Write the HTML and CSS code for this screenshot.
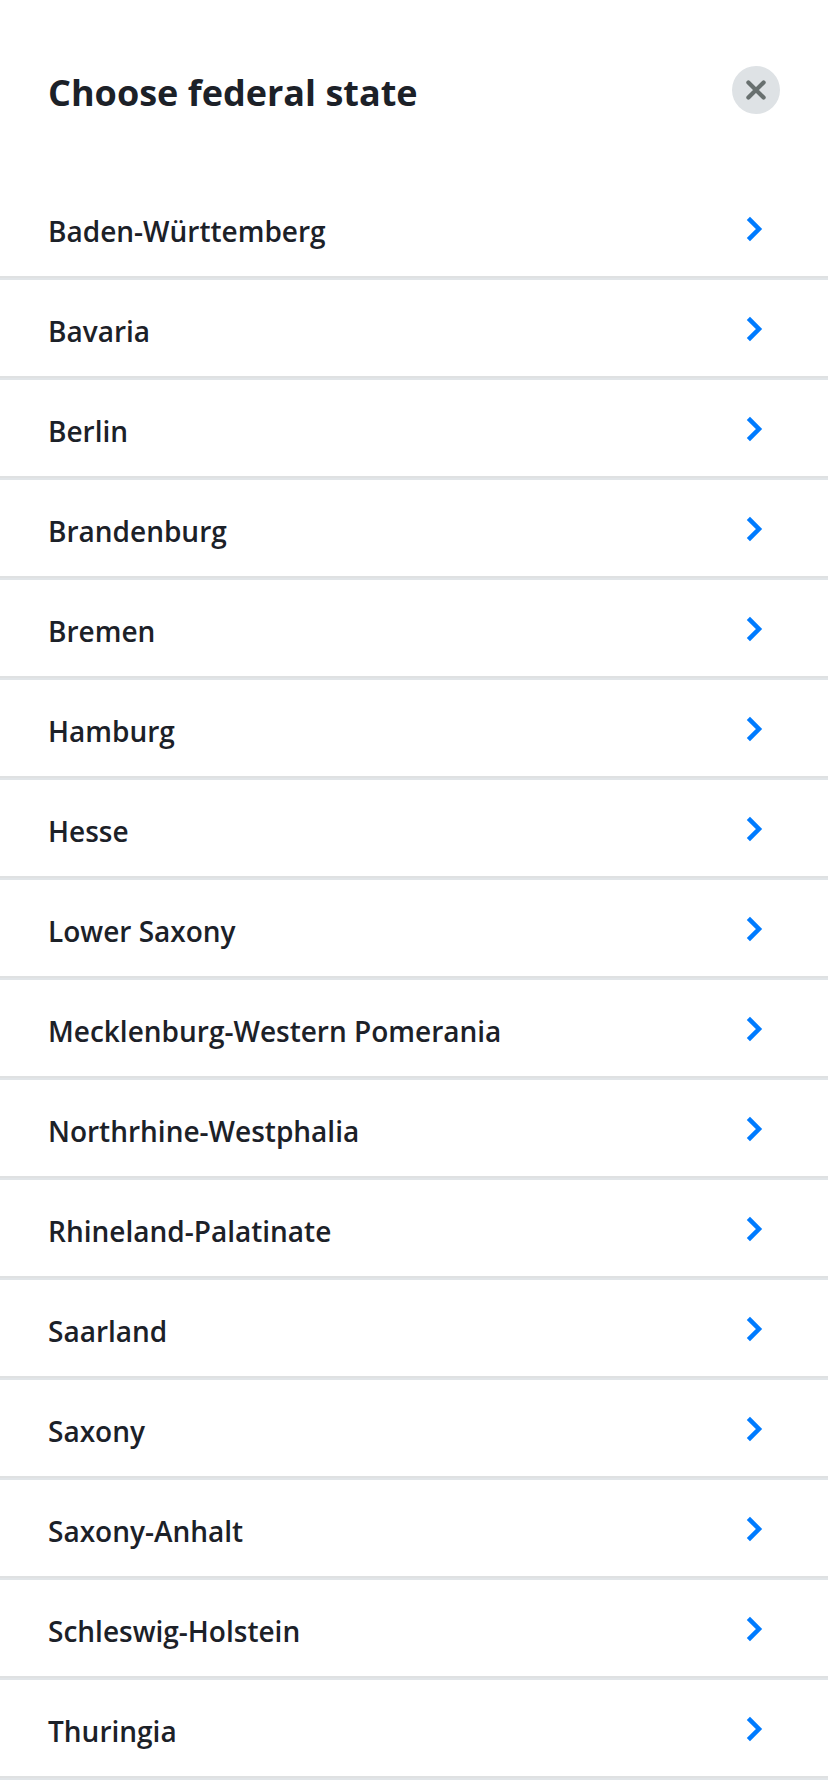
FILE: index.html
```html
<!DOCTYPE html>
<html lang="en">
<head>
<meta charset="utf-8">
<title>Choose federal state</title>
<link rel="stylesheet" href="styles.css">
</head>
<body>
<header class="header">
  <h1 class="title">Choose federal state</h1>
  <button class="close" aria-label="Close"><svg width="48" height="48" viewBox="0 0 48 48"><path d="M16.4 16.4 31.6 31.6M31.6 16.4 16.4 31.6"/></svg></button>
</header>
<ul class="list" id="states"></ul>
<script src="states.js"></script>
</body>
</html>
```
FILE: styles.css
```css
* { box-sizing: border-box; }
body {
  margin: 0;
  height: 1792px;
  overflow: hidden;
  background: #fff;
  color: #1c2128;
  font-family: "Open Sans", sans-serif;
}
.header {
  display: flex;
  justify-content: space-between;
  align-items: flex-start;
  height: 180px;
  padding: 66px 48px 0;
}
.title {
  margin: 0;
  font-size: 36px;
  line-height: 54px;
  font-weight: 700;
}
.close {
  width: 48px;
  height: 48px;
  padding: 0;
  border: 0;
  border-radius: 50%;
  background: #dee2e5;
}
.close svg {
  display: block;
  fill: none;
  stroke: #68706f;
  stroke-width: 4.2;
  stroke-linecap: round;
}
.list { margin: 0; padding: 0; list-style: none; }
.row {
  display: flex;
  justify-content: space-between;
  height: 100px;
  padding: 29px 64px 0 48px;
  border-bottom: 2px solid #e1e5e8;
  box-shadow: inset 0 -2px #dfe1e2;
}
.name { font-size: 28px; line-height: 44px; font-weight: 600; }
.chevron {
  width: 20px;
  height: 28px;
  margin-top: 6px;
  fill: none;
  stroke: #007bff;
  stroke-width: 4.5;
}
```
FILE: states.js
```js
const states = ["Baden-Württemberg", "Bavaria", "Berlin", "Brandenburg", "Bremen", "Hamburg", "Hesse", "Lower Saxony", "Mecklenburg-Western Pomerania", "Northrhine-Westphalia", "Rhineland-Palatinate", "Saarland", "Saxony", "Saxony-Anhalt", "Schleswig-Holstein", "Thuringia"];
document.getElementById("states").innerHTML = states.map(name =>
  `<li class="row"><span class="name">${name}</span><svg class="chevron" viewBox="0 0 20 28"><path d="M4.4 3.3 15 14 4.4 24.7"/></svg></li>`
).join("");
```
